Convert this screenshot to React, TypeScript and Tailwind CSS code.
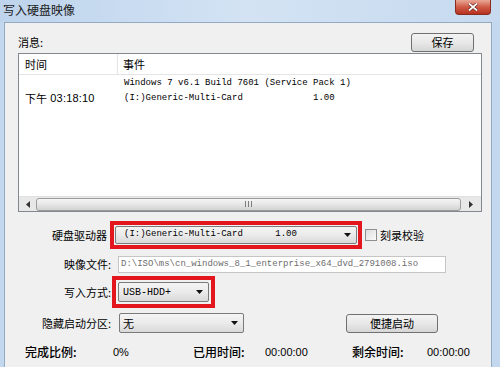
import React from 'react';

const cjk = "font-['Noto_Sans_CJK_SC','Noto_Sans',sans-serif]";
const mono = "font-['Liberation_Mono','Noto_Sans_CJK_SC',monospace]";
const sans = "font-['Liberation_Sans','Noto_Sans_CJK_SC',sans-serif]";

const DownArrow = () => (
  <svg width="7" height="4" viewBox="0 0 7 4" className="shrink-0">
    <path d="M0 0h7L3.5 4z" fill="#111" />
  </svg>
);

const Combo = ({ className, textClass, children }: { className: string; textClass: string; children: React.ReactNode }) => (
  <div
    className={`flex items-center border border-[#7a7a7a] rounded-[2px] bg-linear-to-b from-[#f4f4f4] via-[#ebebeb] to-[#d9d9d9] ${className}`}
  >
    <div className={`flex-1 whitespace-pre ${textClass}`}>{children}</div>
    <div className="mr-[5px]">
      <DownArrow />
    </div>
  </div>
);

const WinButton = ({ className, children }: { className: string; children: React.ReactNode }) => (
  <div
    className={`flex items-center justify-center border border-[#707070] rounded-[3px] bg-linear-to-b from-[#f3f3f3] via-[#e8e8e8] to-[#d6d6d6] text-[11px] text-black ${cjk} ${className}`}
  >
    {children}
  </div>
);

export default function App() {
  return (
    <div className={`w-[500px] h-[367px] overflow-hidden flex flex-col bg-[#c3d7ee] ${cjk}`}>
      {/* 标题栏 */}
      <div className="h-[22px] shrink-0 flex items-start bg-linear-to-r from-[#bed4ec] via-[#d3e3f4] to-[#c6d9ee]">
        <div className="pl-[3px] pt-[2px] text-[12px] leading-[16px] text-[#1a1a1a]">写入硬盘映像</div>
        <div className="ml-auto mr-[9px] w-[36px] h-[15px] flex items-center justify-center rounded-b-[4px] border border-t-0 border-[#8a2a20] bg-linear-to-b from-[#e8a896] via-[#cf5a45] to-[#b7301f]">
          <svg width="10" height="8" viewBox="0 0 10 8">
            <path d="M1 0.5L9 7.5M9 0.5L1 7.5" stroke="#5a1a12" strokeWidth="3" />
            <path d="M1 0.5L9 7.5M9 0.5L1 7.5" stroke="#fff" strokeWidth="1.8" />
          </svg>
        </div>
      </div>

      {/* 主体 */}
      <div className="flex-1 ml-[4px] mr-[8px] bg-[#f0f0f0] border border-b-0 border-[#94a9c2] pl-[13px] pr-[9px] pt-[10px] flex flex-col">
        <div className="h-[19px] flex items-center">
          <span className="text-[11px] text-black">消息:</span>
          <WinButton className="ml-auto mr-[8px] w-[63px] h-[19px]">保存</WinButton>
        </div>

        {/* 列表 */}
        <div className="mt-[1px] h-[159px] border border-[#828790] bg-white flex flex-col">
          <div className="h-[21px] flex border-b border-[#e5e5e5] text-[11px] text-black">
            <div className="w-[99px] border-r border-[#e5e5e5] pl-[6px] flex items-center">时间</div>
            <div className="pl-[5px] flex items-center">事件</div>
          </div>
          <div className="flex pt-[1px]">
            <div className="w-[99px] pl-[6px] flex flex-col">
              <div className="h-[15px]" />
              <div className="h-[15px] flex items-center text-[11px] text-black whitespace-pre">
                下午<span className={`${sans} text-[11px] tracking-[0.2px]`}> 03:18:10</span>
              </div>
            </div>
            <div className={`pl-[6px] flex flex-col text-[9px] text-black ${mono}`}>
              <div className="h-[15px] leading-[15px] whitespace-pre">Windows 7 v6.1 Build 7601 (Service Pack 1)</div>
              <div className="h-[15px] leading-[15px] whitespace-pre">(I:)Generic-Multi-Card             1.00</div>
            </div>
          </div>

          {/* 滚动条 */}
          <div className="mt-auto h-[15px] bg-[#e8e8e8] border-t border-[#e0e0e0] flex items-center">
            <div className="w-[17px] flex justify-center">
              <svg width="4" height="7" viewBox="0 0 4 7">
                <path d="M4 0v7L0 3.5z" fill="#333" />
              </svg>
            </div>
            <div className="w-[425px] h-[13px] rounded-[3px] border border-[#9c9c9c] bg-linear-to-b from-[#f6f6f6] via-[#e6e6e6] to-[#d3d3d3] flex items-center justify-center gap-[2px]">
              <div className="w-[1px] h-[6px] bg-[#7d7d7d]" />
              <div className="w-[1px] h-[6px] bg-[#7d7d7d]" />
              <div className="w-[1px] h-[6px] bg-[#7d7d7d]" />
            </div>
            <div className="flex-1 flex justify-center">
              <svg width="4" height="7" viewBox="0 0 4 7">
                <path d="M0 0v7L4 3.5z" fill="#333" />
              </svg>
            </div>
          </div>
        </div>

        {/* 硬盘驱动器 */}
        <div className="mt-[9px] h-[28px] flex items-center text-[11px] text-black">
          <div className="w-[89px] text-right">硬盘驱动器</div>
          <div className="ml-[3px] w-[252px] h-[28px] border-[4px] border-[#e3151d] p-[1px] flex">
            <Combo className="flex-1" textClass={`pl-[8px] text-[9px] text-black ${mono}`}>
              (I:)Generic-Multi-Card      1.00
            </Combo>
          </div>
          <div className="ml-[3px] w-[12px] h-[12px] border border-[#8e8f8f] bg-linear-to-br from-[#dcdcdc] to-[#fbfbfb]" />
          <div className="ml-[3px]">刻录校验</div>
        </div>

        {/* 映像文件 */}
        <div className="mt-[7px] h-[17px] flex items-center text-[11px] text-black">
          <div className="w-[93px] text-right">映像文件:</div>
          <div className={`ml-[7px] w-[328px] h-[17px] border border-[#c5c5c5] bg-white flex items-center pl-[2px] text-[9px] text-[#6d6d6d] whitespace-pre ${mono}`}>
            D:\ISO\ms\cn_windows_8_1_enterprise_x64_dvd_2791008.iso
          </div>
        </div>

        {/* 写入方式 */}
        <div className="mt-[3px] h-[32px] flex items-center text-[11px] text-black">
          <div className="w-[93px] text-right">写入方式:</div>
          <div className="ml-[1px] w-[103px] h-[32px] border-[4px] border-[#e3151d] p-[2px] flex">
            <Combo className="flex-1" textClass={`pl-[4px] text-[10px] text-black ${mono}`}>
              USB-HDD+
            </Combo>
          </div>
        </div>

        {/* 隐藏启动分区 */}
        <div className="mt-[5px] h-[20px] flex items-center text-[11px] text-black">
          <div className="w-[93px] text-right">隐藏启动分区:</div>
          <Combo className="ml-[8px] w-[125px] h-[20px]" textClass="pl-[3px] text-[11px] text-black">
            无
          </Combo>
          <WinButton className="ml-[102px] w-[92px] h-[19px]">便捷启动</WinButton>
        </div>

        {/* 状态 */}
        <div className="mt-[11px] h-[16px] pl-[7px] flex items-center text-black">
          <div className="w-[88px] text-[12px] font-medium">完成比例:</div>
          <div className={`w-[80px] text-[11px] ${sans}`}>0%</div>
          <div className="w-[72px] text-[12px] font-medium">已用时间:</div>
          <div className={`w-[87px] text-[11px] ${sans}`}>00:00:00</div>
          <div className="w-[75px] text-[12px] font-medium">剩余时间:</div>
          <div className={`text-[11px] ${sans}`}>00:00:00</div>
        </div>
      </div>
    </div>
  );
}
